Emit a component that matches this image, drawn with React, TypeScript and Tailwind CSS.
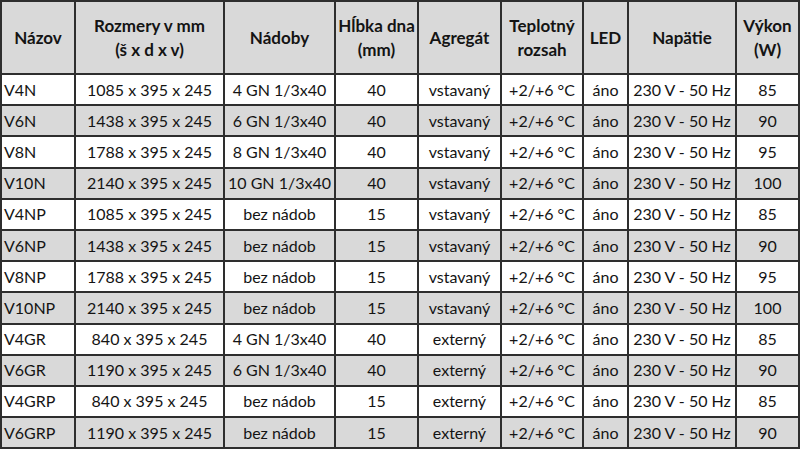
import React from "react";

const rows: string[][] = [
  ["V4N", "1085 x 395 x 245", "4 GN 1/3x40", "40", "vstavaný", "+2/+6 °C", "áno", "230 V - 50 Hz", "85"],
  ["V6N", "1438 x 395 x 245", "6 GN 1/3x40", "40", "vstavaný", "+2/+6 °C", "áno", "230 V - 50 Hz", "90"],
  ["V8N", "1788 x 395 x 245", "8 GN 1/3x40", "40", "vstavaný", "+2/+6 °C", "áno", "230 V - 50 Hz", "95"],
  ["V10N", "2140 x 395 x 245", "10 GN 1/3x40", "40", "vstavaný", "+2/+6 °C", "áno", "230 V - 50 Hz", "100"],
  ["V4NP", "1085 x 395 x 245", "bez nádob", "15", "vstavaný", "+2/+6 °C", "áno", "230 V - 50 Hz", "85"],
  ["V6NP", "1438 x 395 x 245", "bez nádob", "15", "vstavaný", "+2/+6 °C", "áno", "230 V - 50 Hz", "90"],
  ["V8NP", "1788 x 395 x 245", "bez nádob", "15", "vstavaný", "+2/+6 °C", "áno", "230 V - 50 Hz", "95"],
  ["V10NP", "2140 x 395 x 245", "bez nádob", "15", "vstavaný", "+2/+6 °C", "áno", "230 V - 50 Hz", "100"],
  ["V4GR", "840 x 395 x 245", "4 GN 1/3x40", "40", "externý", "+2/+6 °C", "áno", "230 V - 50 Hz", "85"],
  ["V6GR", "1190 x 395 x 245", "6 GN 1/3x40", "40", "externý", "+2/+6 °C", "áno", "230 V - 50 Hz", "90"],
  ["V4GRP", "840 x 395 x 245", "bez nádob", "15", "externý", "+2/+6 °C", "áno", "230 V - 50 Hz", "85"],
  ["V6GRP", "1190 x 395 x 245", "bez nádob", "15", "externý", "+2/+6 °C", "áno", "230 V - 50 Hz", "90"],
];

const headers: React.ReactNode[] = [
  "Názov",
  <>Rozmery v mm<br />(š x d x v)</>,
  "Nádoby",
  <>Hĺbka dna<br />(mm)</>,
  "Agregát",
  <>Teplotný<br />rozsah</>,
  "LED",
  "Napätie",
  <>Výkon<br />(W)</>,
];

const widths = ["w-[74px]", "w-[149px]", "w-[111px]", "w-[83px]", "w-[83px]", "w-[82px]", "w-[45px]", "w-[108px]", "w-[63px]"];

export default function App() {
  return (
    <div className="w-[800px] h-[450px] bg-white overflow-hidden font-['Lato',sans-serif] text-[#141414]">
      <table className="w-[800px] table-fixed border-collapse border-2 border-[#2e2e2e]">
        <colgroup>
          {widths.map((w, i) => (
            <col key={i} className={w} />
          ))}
        </colgroup>
        <thead>
          <tr className="h-[73px] bg-[#d9d9d9]">
            {headers.map((h, i) => (
              <th
                key={i}
                className="border-2 border-[#2e2e2e] p-0 text-center align-middle text-[17px] leading-[24px] font-bold whitespace-nowrap"
              >
                {h}
              </th>
            ))}
          </tr>
        </thead>
        <tbody>
          {rows.map((r, ri) => (
            <tr key={ri} className={`h-[31.2px] ${ri % 2 === 1 ? "bg-[#d9d9d9]" : "bg-white"}`}>
              {r.map((c, ci) => (
                <td
                  key={ci}
                  className={`border-2 border-[#2e2e2e] py-0 text-[16px] leading-[20px] whitespace-nowrap ${
                    ci === 0 ? "text-left pl-[2px] pr-0" : "text-center px-0"
                  }`}
                >
                  {c}
                </td>
              ))}
            </tr>
          ))}
        </tbody>
      </table>
    </div>
  );
}
